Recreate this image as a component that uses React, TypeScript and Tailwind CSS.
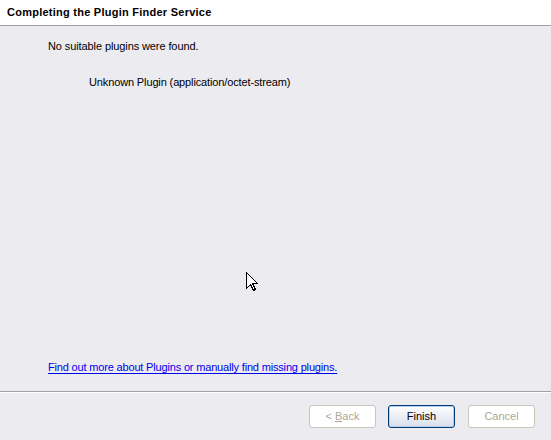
import React from "react";

export default function App() {
  return (
    <div className="relative w-[551px] h-[440px] flex flex-col bg-[#ecebf0] text-black text-[11px] leading-[13px] [font-family:'Liberation_Sans',Arial,sans-serif] overflow-hidden">
      <div className="h-[26px] shrink-0 bg-white border-b border-[#a0a0a0] pl-[7px] pt-[6px]">
        <span className="font-bold tracking-[0.25px]">Completing the Plugin Finder Service</span>
      </div>
      <div className="flex-1 flex flex-col pl-[48px] tracking-[-0.1px]">
        <div className="mt-[14px]">No suitable plugins were found.</div>
        <div className="mt-[23px] pl-[41px] tracking-[-0.13px]">Unknown Plugin (application/octet-stream)</div>
        <div className="mt-auto mb-[17px]">
          <a className="text-[#0000ee] underline underline-offset-[2px] cursor-pointer tracking-[-0.17px]">
            Find out more about Plugins or manually find missing plugins.
          </a>
        </div>
      </div>
      <div className="h-[49px] shrink-0 border-t border-[#a0a0a0] shadow-[inset_0_1px_0_#ffffff] flex justify-end items-start pt-[13px] pr-[16px] gap-3">
        <button className="w-[67px] h-[23px] bg-white border border-[#c9c7ba] rounded-[3px] text-[#aca899]">
          &lt; <span className="underline">B</span>ack
        </button>
        <button className="w-[67px] h-[23px] border border-[#003c74] rounded-[3px] bg-gradient-to-b from-white to-[#d8deec] shadow-[inset_0_0_0_1px_#b9cdf0] text-black">
          Finish
        </button>
        <button className="ml-[1px] w-[67px] h-[23px] bg-white border border-[#c9c7ba] rounded-[3px] text-[#aca899]">
          Cancel
        </button>
      </div>
      <svg className="absolute left-[246px] top-[272px]" width="13" height="20" viewBox="0 0 13 20">
        <polygon
          points="0.5,0.5 0.5,16.5 4.5,12.5 7.5,18.5 9.5,17.5 6.5,11.5 11.5,11.5"
          fill="#ffffff"
          stroke="#000000"
          strokeWidth="1"
          shapeRendering="crispEdges"
        />
      </svg>
    </div>
  );
}
